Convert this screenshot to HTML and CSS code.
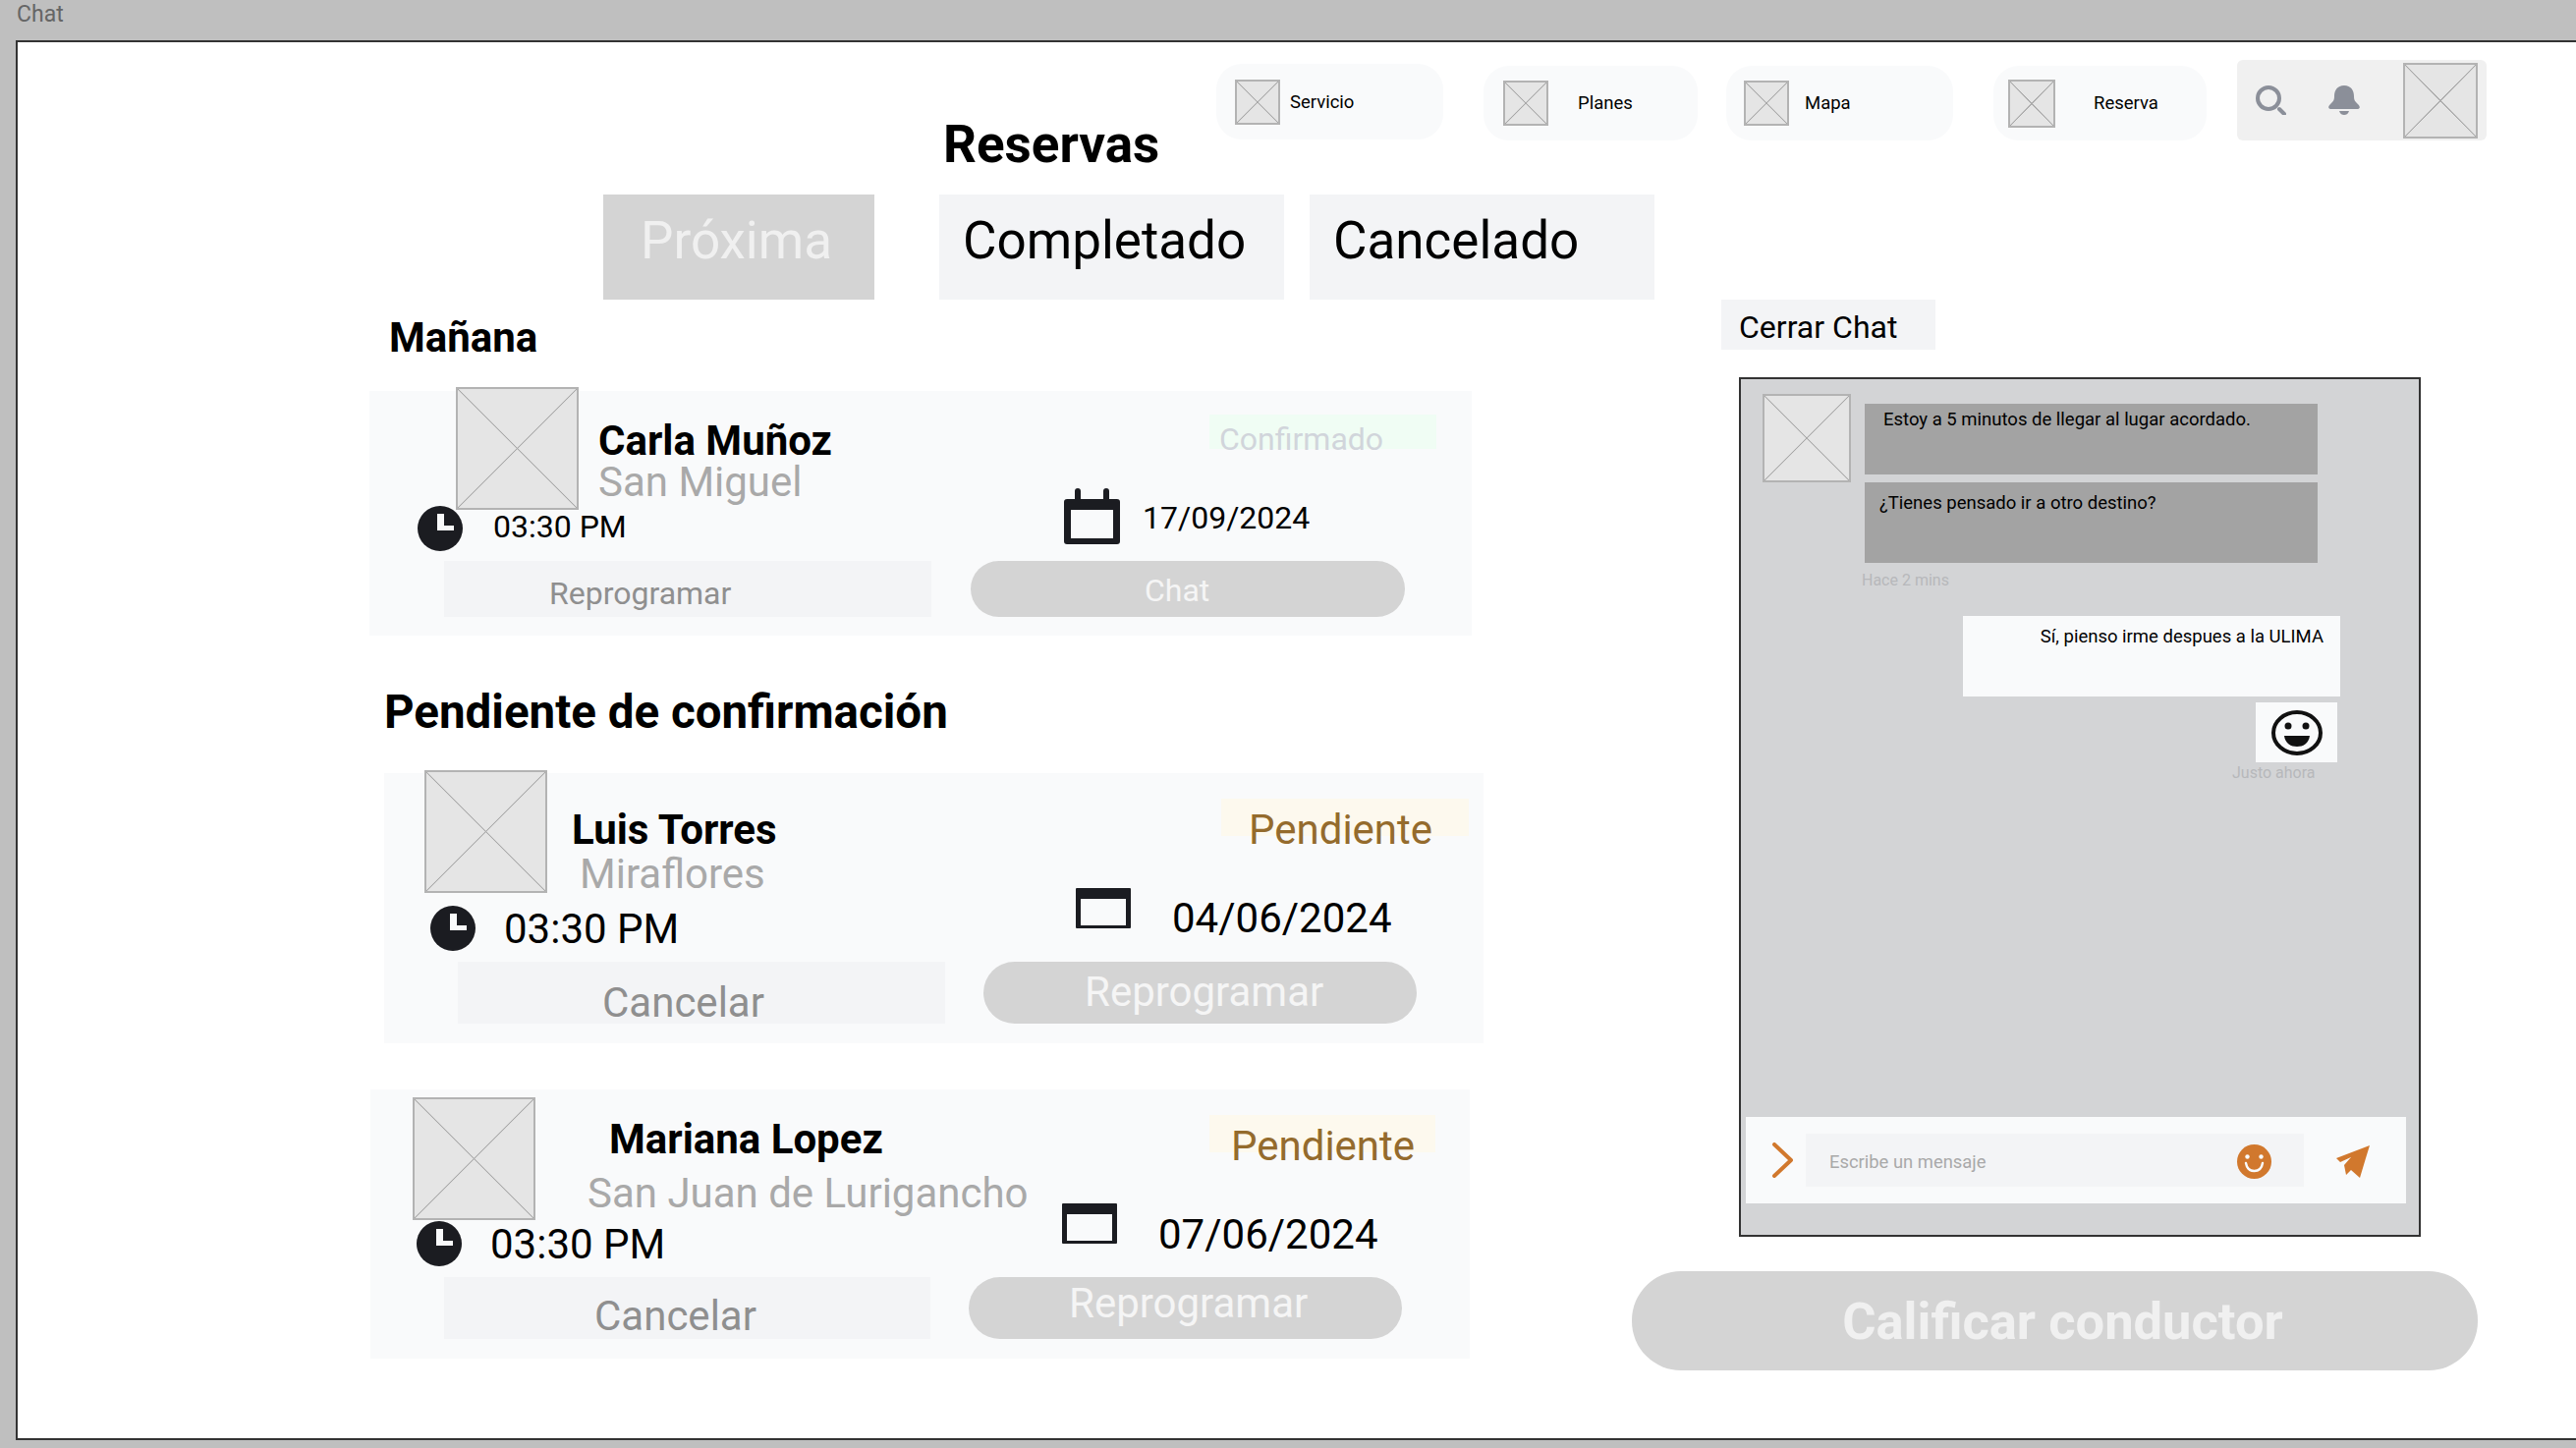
FILE: index.html
```html
<!DOCTYPE html>
<html lang="es">
<head>
    <meta charset="UTF-8">
    <meta name="viewport" content="width=device-width, initial-scale=1.0">
    <title>Chat</title>
    <link rel="stylesheet" href="styles.css">
</head>
<body>
    <div class="titlebar">Chat</div>

    <div class="frame">
        <!-- Title and navigation -->
        <header class="topbar">
            <h1 class="page-title">Reservas</h1>
            <nav class="nav">
                <a class="pill pill-servicio"><span class="ph"></span><span>Servicio</span></a>
                <a class="pill pill-planes"><span class="ph"></span><span>Planes</span></a>
                <a class="pill pill-mapa"><span class="ph"></span><span>Mapa</span></a>
                <a class="pill pill-reserva"><span class="ph"></span><span>Reserva</span></a>
            </nav>
            <div class="tools">
                <svg class="tool-icon" viewBox="0 0 32 30"><circle cx="14" cy="13" r="11" fill="none" stroke="#8b8f99" stroke-width="4"/><path d="M25 24l5 5" stroke="#8b8f99" stroke-width="4" stroke-linecap="round"/></svg>
                <svg class="tool-icon bell" viewBox="0 0 32 30"><path d="M16 0C9 0 6 5 6 11c0 4-1 5-4 8-3 3-2 5 1 5h26c3 0 4-2 1-5-3-3-4-4-4-8 0-6-3-11-10-11z" fill="#8b8f99"/><path d="M11 26h10c-1 3-3 4-5 4s-4-1-5-4z" fill="#8b8f99"/></svg>
                <span class="ph tools-avatar"></span>
            </div>
        </header>

        <div class="tabs">
            <div class="tab tab-active">Próxima</div>
            <div class="tab tab-done">Completado</div>
            <div class="tab tab-cancel">Cancelado</div>
        </div>

        <div class="content">
            <!-- Bookings -->
            <main class="bookings">
                <h2 class="section-title title-tomorrow">Mañana</h2>

                <article class="card card-carla">
                    <div class="card-head">
                        <span class="ph thumb"></span>
                        <div class="who">
                            <h3 class="name">Carla Muñoz</h3>
                            <p class="place">San Miguel</p>
                        </div>
                        <span class="badge badge-ok">Confirmado</span>
                    </div>
                    <div class="when">
                        <div class="when-time">
                            <svg class="clock" viewBox="0 0 46 46"><circle cx="23" cy="23" r="23" fill="#1b1c21"/><path d="M20 8h7v12h10v5H20z" fill="#f9fafb"/></svg>
                            <span class="time">03:30 PM</span>
                        </div>
                        <svg class="calendar calendar-pegs" viewBox="0 0 57 58"><path d="M14 3v10M43 3v10" stroke="#1b1c21" stroke-width="6" stroke-linecap="round"/><rect y="11" width="57" height="46" rx="3" fill="#1b1c21"/><rect x="7" y="22" width="43" height="29" fill="#f9fafb"/></svg>
                        <span class="date">17/09/2024</span>
                    </div>
                    <div class="actions">
                        <button class="btn btn-light">Reprogramar</button>
                        <button class="btn btn-pill">Chat</button>
                    </div>
                </article>

                <h2 class="section-title title-pending">Pendiente de confirmación</h2>

                <article class="card card-luis">
                    <div class="card-head">
                        <span class="ph thumb"></span>
                        <div class="who">
                            <h3 class="name">Luis Torres</h3>
                            <p class="place">Miraflores</p>
                        </div>
                        <span class="badge badge-wait">Pendiente</span>
                    </div>
                    <div class="when">
                        <div class="when-time">
                            <svg class="clock" viewBox="0 0 46 46"><circle cx="23" cy="23" r="23" fill="#1b1c21"/><path d="M20 8h7v12h10v5H20z" fill="#f9fafb"/></svg>
                            <span class="time">03:30 PM</span>
                        </div>
                        <svg class="calendar" viewBox="0 0 56 41"><rect width="56" height="41" rx="1" fill="#1b1c21"/><rect x="5" y="11" width="46" height="27" fill="#f9fafb"/></svg>
                        <span class="date">04/06/2024</span>
                    </div>
                    <div class="actions">
                        <button class="btn btn-light">Cancelar</button>
                        <button class="btn btn-pill">Reprogramar</button>
                    </div>
                </article>

                <article class="card card-mariana">
                    <div class="card-head">
                        <span class="ph thumb"></span>
                        <div class="who">
                            <h3 class="name">Mariana Lopez</h3>
                            <p class="place">San Juan de Lurigancho</p>
                        </div>
                        <span class="badge badge-wait">Pendiente</span>
                    </div>
                    <div class="when">
                        <div class="when-time">
                            <svg class="clock" viewBox="0 0 46 46"><circle cx="23" cy="23" r="23" fill="#1b1c21"/><path d="M20 8h7v12h10v5H20z" fill="#f9fafb"/></svg>
                            <span class="time">03:30 PM</span>
                        </div>
                        <svg class="calendar" viewBox="0 0 56 41"><rect width="56" height="41" rx="1" fill="#1b1c21"/><rect x="5" y="11" width="46" height="27" fill="#f9fafb"/></svg>
                        <span class="date">07/06/2024</span>
                    </div>
                    <div class="actions">
                        <button class="btn btn-light">Cancelar</button>
                        <button class="btn btn-pill">Reprogramar</button>
                    </div>
                </article>
            </main>

            <!-- Chat -->
            <aside class="side">
                <div class="close-chat">Cerrar Chat</div>
                <section class="chat">
                    <div class="incoming">
                        <span class="ph chat-avatar"></span>
                        <div class="incoming-msgs">
                            <p class="bubble bubble-first">Estoy a 5 minutos de llegar al lugar acordado.</p>
                            <p class="bubble bubble-second">¿Tienes pensado ir a otro destino?</p>
                            <p class="stamp stamp-in">Hace 2 mins</p>
                        </div>
                    </div>
                    <p class="bubble-out">Sí, pienso irme despues a la ULIMA</p>
                    <div class="emoji-box">
                        <svg class="emoji" viewBox="0 0 52 46"><ellipse cx="26" cy="23" rx="24" ry="21" fill="none" stroke="#111" stroke-width="4"/><circle cx="17" cy="16" r="3.5" fill="#111"/><circle cx="35" cy="16" r="3.5" fill="#111"/><path d="M13 26h26c-1 8-7 11-13 11s-12-3-13-11z" fill="#111"/></svg>
                    </div>
                    <p class="stamp stamp-out">Justo ahora</p>

                    <div class="composer">
                        <svg class="chevron" viewBox="0 0 21 36"><path d="M2 2l17 16L2 34" fill="none" stroke="#d1782d" stroke-width="4" stroke-linecap="round" stroke-linejoin="round"/></svg>
                        <div class="composer-input">
                            <span>Escribe un mensaje</span>
                            <svg class="composer-smile" viewBox="0 0 35 35"><circle cx="17.5" cy="17.5" r="17.5" fill="#d1782d"/><circle cx="10.5" cy="12.5" r="2.2" fill="#f9fafb"/><circle cx="24.5" cy="12.5" r="2.2" fill="#f9fafb"/><path d="M9 19c1 6 5 8 8.500 8s7.500-2 8.500-8" fill="none" stroke="#f9fafb" stroke-width="2.400" stroke-linecap="round"/></svg>
                        </div>
                        <svg class="send" viewBox="0 0 34 33"><path d="M34 0L0 13l4 4 11-5-7 8 2 10 5-5 9 8 6-20z" fill="#d1782d"/></svg>
                    </div>
                </section>
                <button class="rate-btn">Calificar conductor</button>
            </aside>
        </div>
    </div>
</body>
</html>
```

FILE: styles.css
```css
* {
    box-sizing: border-box;
}

body {
    margin: 0;
    height: 1474px;
    overflow: hidden;
    background-color: #bfbfbf;
    font-family: Roboto, "Liberation Sans", sans-serif;
    color: #000;
}

h1, h2, h3, p {
    margin: 0;
    font-weight: normal;
}

svg {
    display: block;
    flex-shrink: 0;
}

.titlebar {
    height: 41px;
    padding-left: 17px;
    font-size: 23px;
    line-height: 30px;
    color: #666;
}

.frame {
    height: 1425px;
    margin-left: 16px;
    background: white;
    border: 2px solid #333;
    border-right: 0;
    overflow: hidden;
}

/* wireframe image placeholder */
.ph {
    display: block;
    flex-shrink: 0;
    border: 2px solid #b3b3b3;
    background-color: #e5e5e5;
    background-image:
        linear-gradient(to top right, transparent calc(50% - 0.8px), #a8a8a8 calc(50% - 0.3px), #a8a8a8 calc(50% + 0.3px), transparent calc(50% + 0.8px)),
        linear-gradient(to bottom right, transparent calc(50% - 0.8px), #a8a8a8 calc(50% - 0.3px), #a8a8a8 calc(50% + 0.3px), transparent calc(50% + 0.8px));
}

/* top bar */
.topbar {
    display: flex;
    align-items: flex-start;
    height: 129px;
    padding: 18px 0 0 942px;
}

.page-title {
    width: 278px;
    margin-top: 60px;
    font-size: 53px;
    line-height: 53px;
    font-weight: bold;
}

.nav {
    display: flex;
    align-items: flex-start;
}

.pill {
    display: flex;
    align-items: center;
    height: 76px;
    margin-top: 6px;
    border-radius: 26px;
    background-color: #f9fafb;
    font-size: 18.5px;
}

.pill .ph {
    width: 46px;
    height: 46px;
}

.pill-servicio {
    width: 231px;
    height: 77px;
    margin-top: 4px;
    padding-left: 19px;
    gap: 10px;
}

.pill-planes {
    width: 218px;
    margin-left: 41px;
    padding-left: 20px;
    gap: 30px;
}

.pill-mapa {
    width: 231px;
    margin-left: 29px;
    padding-left: 18px;
    gap: 16px;
}

.pill-reserva {
    width: 217px;
    margin-left: 41px;
    padding-left: 15px;
    gap: 39px;
}

.pill-reserva .ph {
    width: 48px;
    height: 49px;
}

.tools {
    display: flex;
    align-items: center;
    width: 254px;
    height: 82px;
    margin-left: 31px;
    padding-left: 18px;
    border-radius: 6px;
    background-color: #f0f0f0;
}

.tool-icon {
    width: 32px;
    height: 30px;
}

.bell {
    margin-left: 43px;
}

.tools-avatar {
    width: 76px;
    height: 77px;
    margin-left: 44px;
}

/* tabs */
.tabs {
    display: flex;
    padding-left: 596px;
    margin-top: 26px;
}

.tab {
    height: 107px;
    font-size: 53px;
    line-height: 94px;
    background-color: #f3f4f6;
}

.tab-active {
    width: 276px;
    padding-left: 38px;
    background-color: #d4d4d4;
    color: #f0f0f0;
}

.tab-done {
    width: 351px;
    margin-left: 66px;
    padding-left: 24px;
}

.tab-cancel {
    width: 351px;
    margin-left: 26px;
    padding-left: 24px;
}

/* two columns */
.content {
    display: grid;
    grid-template-columns: 1285px 870px;
    padding-left: 358px;
}

.section-title {
    font-weight: bold;
}

.title-tomorrow {
    margin: 18px 0 33px 20px;
    font-size: 42px;
    line-height: 42px;
}

.title-pending {
    margin: 54px 0 38px 15px;
    font-size: 47.5px;
    line-height: 48px;
}

/* booking cards */
.card {
    display: flow-root;
    background-color: #f9fafb;
}

.card-head {
    display: flex;
    align-items: flex-start;
}

.thumb {
    width: 125px;
    height: 125px;
}

.name {
    font-size: 42px;
    line-height: 42px;
    font-weight: bold;
}

.place {
    font-size: 42px;
    line-height: 42px;
    color: #a9a9a9;
    white-space: nowrap;
}

.badge {
    margin-left: auto;
    white-space: nowrap;
}

.badge-ok {
    width: 231px;
    height: 35px;
    margin-top: 28px;
    margin-right: 36px;
    padding-left: 10px;
    background-color: #f0fdf4;
    color: #d1d5db;
    font-size: 32px;
    line-height: 50px;
}

.badge-wait {
    height: 38px;
    background-color: #fdf9ee;
    color: #946b2d;
    font-size: 42px;
    line-height: 64px;
}

.when {
    display: flex;
    align-items: flex-start;
}

.when-time {
    display: flex;
    align-items: flex-start;
    width: 704px;
    flex-shrink: 0;
}

.clock {
    width: 46px;
    height: 46px;
    margin-top: 18px;
}

.time {
    margin-left: 29px;
    margin-top: 20px;
    font-size: 42px;
    line-height: 44px;
}

.date {
    font-size: 42px;
    line-height: 44px;
}

.calendar {
    width: 56px;
    height: 41px;
}

.actions {
    display: flex;
}

.btn {
    display: block;
    height: 63px;
    margin: 0;
    padding: 0;
    border: 0;
    text-align: left;
    font-family: inherit;
    font-size: 42px;
    white-space: nowrap;
}

.btn-light {
    width: 496px;
    background-color: #f3f4f6;
    color: #8f8f8f;
}

.btn-pill {
    width: 441px;
    margin-left: 39px;
    border-radius: 32px;
    background-color: #d4d4d4;
    color: #f5f5f5;
}

/* first card */
.card-carla {
    width: 1122px;
    height: 249px;
}

.card-carla .card-head {
    height: 103px;
    margin-top: -4px;
    padding-left: 88px;
}

.card-carla .who {
    margin: 34px 0 0 20px;
}

.card-carla .place {
    margin-top: 0;
}

.card-carla .when-time {
    width: 707px;
    padding-left: 49px;
}

.card-carla .time {
    margin-left: 31px;
    margin-top: 21px;
    font-size: 32px;
    line-height: 36px;
}

.calendar-pegs {
    width: 57px;
    height: 58px;
}

.card-carla .date {
    margin: 12px 0 0 23px;
    font-size: 32px;
    line-height: 36px;
}

.card-carla .actions {
    margin-top: 10px;
    padding-left: 76px;
}

.card-carla .btn {
    height: 57px;
    font-size: 32px;
}

.card-carla .btn-light {
    padding-left: 107px;
    line-height: 66px;
}

.card-carla .btn-pill {
    width: 442px;
    margin-left: 40px;
    padding-left: 177px;
    line-height: 60px;
}

/* second card */
.card-luis {
    width: 1119px;
    height: 275px;
    margin-left: 15px;
}

.card-luis .card-head {
    height: 120px;
    margin-top: -3px;
    padding-left: 41px;
}

.card-luis .who {
    margin: 40px 0 0 25px;
}

.card-luis .place {
    margin: 3px 0 0 8px;
}

.card-luis .badge {
    width: 252px;
    margin-top: 29px;
    margin-right: 15px;
    padding-left: 28px;
}

.card-luis .when-time {
    padding-left: 47px;
}

.card-luis .date {
    margin: 9px 0 0 42px;
}

.card-luis .actions {
    margin-top: 11px;
    padding-left: 75px;
}

.card-luis .btn-light {
    padding-left: 147px;
    line-height: 84px;
}

.card-luis .btn-pill {
    padding-left: 103px;
    padding-bottom: 3px;
}

/* third card */
.card-mariana {
    width: 1119px;
    height: 274px;
    margin-top: 47px;
    margin-left: 1px;
}

.card-mariana .card-head {
    height: 108px;
    padding-top: 8px;
    padding-left: 43px;
}

.card-mariana .who {
    margin: 22px 0 0 75px;
}

.card-mariana .place {
    margin: 13px 0 0 -22px;
}

.card-mariana .badge {
    width: 230px;
    margin-top: 18px;
    margin-right: 35px;
    padding-left: 22px;
}

.card-mariana .when {
    margin-top: 8px;
}

.card-mariana .when-time {
    padding-left: 47px;
}

.card-mariana .date {
    margin: 10px 0 0 42px;
}

.card-mariana .actions {
    margin-top: 11px;
    padding-left: 75px;
}

.card-mariana .btn-light {
    width: 495px;
    padding-left: 153px;
    line-height: 80px;
}

.card-mariana .btn-pill {
    padding-left: 102px;
    padding-bottom: 10px;
}

/* chat column */
.close-chat {
    width: 218px;
    height: 51px;
    margin-left: 91px;
    padding-left: 18px;
    background-color: #f3f4f6;
    font-size: 32px;
    line-height: 56px;
}

.chat {
    display: flex;
    flex-direction: column;
    width: 694px;
    height: 875px;
    margin: 28px 0 0 109px;
    padding-top: 15px;
    border: 2px solid #333;
    background-color: #d3d4d6;
    font-size: 18.5px;
}

.incoming {
    display: flex;
    align-items: flex-start;
    padding-left: 22px;
}

.chat-avatar {
    width: 90px;
    height: 90px;
}

.incoming-msgs {
    width: 461px;
    margin-left: 14px;
    padding-top: 10px;
}

.bubble {
    background-color: #a3a3a3;
    line-height: 24px;
}

.bubble-first {
    height: 72px;
    padding: 4px 0 0 19px;
}

.bubble-second {
    height: 82px;
    margin-top: 8px;
    padding: 9px 0 0 15px;
}

.stamp {
    font-size: 16px;
    line-height: 20px;
    color: #b7b8bb;
}

.stamp-in {
    margin: 8px 0 0 -3px;
}

.bubble-out {
    width: 384px;
    height: 82px;
    margin: 26px 0 0 226px;
    padding: 9px 17px 0 0;
    background-color: #f9fafb;
    text-align: right;
    line-height: 24px;
}

.emoji-box {
    display: flex;
    align-items: center;
    justify-content: center;
    width: 83px;
    height: 61px;
    margin: 6px 0 0 524px;
    background-color: #f9fafb;
}

.emoji {
    width: 52px;
    height: 46px;
}

.stamp-out {
    margin: 1px 0 0 500px;
}

.composer {
    display: flex;
    align-items: center;
    width: 672px;
    height: 88px;
    margin: auto 0 32px 5px;
    padding-left: 27px;
    background-color: #f9fafb;
}

.chevron {
    width: 21px;
    height: 36px;
}

.composer-input {
    display: flex;
    align-items: center;
    justify-content: space-between;
    width: 507px;
    height: 54px;
    margin-left: 13px;
    padding: 2px 33px 0 24px;
    background-color: #f3f4f6;
    font-size: 18.4px;
    color: #a9a9a9;
}

.composer-smile {
    width: 35px;
    height: 35px;
}

.send {
    width: 34px;
    height: 33px;
    margin-top: 3px;
    margin-left: 33px;
}

.rate-btn {
    display: block;
    width: 861px;
    height: 101px;
    margin: 35px 0 0 0;
    padding: 0 0 0 16px;
    border: 0;
    border-radius: 50px;
    background-color: #d4d4d4;
    color: #f0f0f0;
    font-family: inherit;
    font-size: 52.5px;
    font-weight: bold;
}
```
